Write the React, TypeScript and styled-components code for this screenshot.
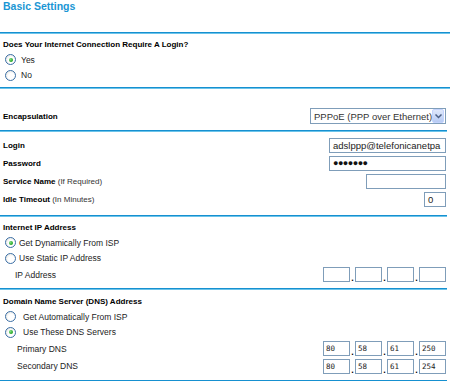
import { styled, createGlobalStyle } from 'styled-components';

const GlobalStyle = createGlobalStyle`
  body {
    margin: 0;
    background: #ffffff;
    font-family: "Liberation Sans", Arial, sans-serif;
    color: #000000;
  }
`

const Page = styled.div`
  width: 450px;
  display: flex;
  flex-direction: column;
  font-size: 8px;
`

const Title = styled.h1`
  margin: 0;
  height: 32px;
  padding-left: 3px;
  font-size: 10.5px;
  line-height: 13px;
  font-weight: bold;
  color: #1a96d4;
`

const Rule = styled.div<{ $short?: boolean }>`
  height: 1px;
  width: ${props => props.$short ? '447px' : '450px'};
  border-top: 1px solid #1690d0;
  background: #6cc4ea;
`

const Section = styled.div<{ $top: number, $bottom: number }>`
  display: flex;
  flex-direction: column;
  padding-top: ${props => props.$top}px;
  padding-bottom: ${props => props.$bottom}px;
`

const Row = styled.div<{ $h: number }>`
  height: ${props => props.$h}px;
  display: flex;
  align-items: center;
  justify-content: space-between;
  padding-left: 3px;
  padding-right: 4px;
`

const Heading = styled.span`
  font-weight: bold;
  color: #000000;
`

const Hint = styled.span`
  font-weight: normal;
  color: #333333;
`

const Label = styled.span<{ $indent?: number }>`
  padding-left: ${props => props.$indent ?? 0}px;
  color: #222222;
  font-size: 8.5px;
`

const RadioLine = styled.label<{ $gap: number }>`
  display: flex;
  align-items: center;
  gap: ${props => props.$gap}px;
  padding-left: 2px;
  color: #222222;
  font-size: 8.5px;
`

const RadioDot = styled.span<{ $checked?: boolean }>`
  width: 9px;
  height: 9px;
  border-radius: 50%;
  border: 1px solid #3a6ea5;
  background: radial-gradient(circle at 60% 60%, #ffffff 40%, #dcdcd6 100%);
  display: flex;
  align-items: center;
  justify-content: center;
  &::after {
    content: "";
    display: ${props => props.$checked ? 'block' : 'none'};
    width: 4px;
    height: 4px;
    border-radius: 50%;
    background: radial-gradient(circle at 35% 35%, #7ee07e 0%, #21a121 70%);
  }
`

const Select = styled.div`
  width: 131px;
  height: 14px;
  border: 1px solid #7f9db9;
  display: flex;
  align-items: center;
  justify-content: space-between;
  padding-left: 3px;
  font-size: 9.5px;
  color: #333333;
  white-space: nowrap;
`

const SelectButton = styled.span`
  width: 13px;
  height: 12px;
  margin-right: 1px;
  background: linear-gradient(#dfe8fb, #b7cbf3);
  border: 1px solid #c3d3fd;
  border-radius: 2px;
  display: flex;
  align-items: center;
  justify-content: center;
`

const TextBox = styled.div<{ $w: number }>`
  width: ${props => props.$w}px;
  height: 13px;
  border: 1px solid #7f9db9;
  display: flex;
  align-items: center;
  padding-left: 3px;
  box-sizing: content-box;
  font-size: 9.5px;
  color: #222222;
  overflow: hidden;
  white-space: nowrap;
`

const Dots = styled.span`
  font-size: 9px;
  letter-spacing: -0.5px;
  color: #111111;
`

const IpGroup = styled.div`
  display: flex;
  align-items: flex-end;
`

const IpCell = styled.span`
  display: flex;
  align-items: flex-end;
`

const IpBox = styled.div`
  width: 23px;
  height: 13px;
  border: 1px solid #7f9db9;
  padding-left: 2px;
  font-family: "DejaVu Sans Mono", monospace;
  font-size: 7.5px;
  line-height: 13px;
  color: #222222;
`

const IpDot = styled.span`
  width: 5px;
  text-align: center;
  font-weight: bold;
  font-size: 9px;
  line-height: 8px;
`

const RadioOption = ({ checked, gap, children }: { checked?: boolean, gap: number, children: React.ReactNode }) => (
  <RadioLine $gap={gap}>
    <RadioDot $checked={checked} />
    {children}
  </RadioLine>
)

const IpAddress = ({ parts }: { parts: string[] }) => (
  <IpGroup>
    {parts.map((part, index) => (
      <IpCell key={index}>
        {index > 0 && <IpDot>.</IpDot>}
        <IpBox>{part}</IpBox>
      </IpCell>
    ))}
  </IpGroup>
)

function App() {
  return (
    <Page>
      <GlobalStyle />
      <Title>Basic Settings</Title>
      <Rule />
      <Section $top={2} $bottom={4}>
        <Row $h={16}><Heading>Does Your Internet Connection Require A Login?</Heading></Row>
        <Row $h={15}><RadioOption checked gap={5}>Yes</RadioOption></Row>
        <Row $h={16}><RadioOption gap={5}>No</RadioOption></Row>
      </Section>
      <Rule />
      <Section $top={18} $bottom={5}>
        <Row $h={18}>
          <Heading>Encapsulation</Heading>
          <Select>
            PPPoE (PPP over Ethernet)
            <SelectButton>
              <svg width="7" height="5" viewBox="0 0 7 5">
                <path d="M0.5 0.5 L3.5 3.5 L6.5 0.5" fill="none" stroke="#4d6185" strokeWidth="1.5" />
              </svg>
            </SelectButton>
          </Select>
        </Row>
      </Section>
      <Rule $short />
      <Section $top={4} $bottom={6}>
        <Row $h={18}>
          <Heading>Login</Heading>
          <TextBox $w={112}>adslppp@telefonicanetpa</TextBox>
        </Row>
        <Row $h={18}>
          <Heading>Password</Heading>
          <TextBox $w={112}><Dots>●●●●●●●</Dots></TextBox>
        </Row>
        <Row $h={18}>
          <span><Heading>Service Name</Heading> <Hint>(If Required)</Hint></span>
          <TextBox $w={75} />
        </Row>
        <Row $h={19}>
          <span><Heading>Idle Timeout</Heading> <Hint>(In Minutes)</Hint></span>
          <TextBox $w={17}>0</TextBox>
        </Row>
      </Section>
      <Rule $short />
      <Section $top={3} $bottom={5}>
        <Row $h={15}><Heading>Internet IP Address</Heading></Row>
        <Row $h={15}><RadioOption checked gap={3}>Get Dynamically From ISP</RadioOption></Row>
        <Row $h={16}><RadioOption gap={3}>Use Static IP Address</RadioOption></Row>
        <Row $h={17}>
          <Label $indent={12}>IP Address</Label>
          <IpAddress parts={['', '', '', '']} />
        </Row>
      </Section>
      <Rule $short />
      <Section $top={3} $bottom={5}>
        <Row $h={16}><Heading>Domain Name Server (DNS) Address</Heading></Row>
        <Row $h={15}><RadioOption gap={7}>Get Automatically From ISP</RadioOption></Row>
        <Row $h={16}><RadioOption checked gap={7}>Use These DNS Servers</RadioOption></Row>
        <Row $h={17}>
          <Label $indent={14}>Primary DNS</Label>
          <IpAddress parts={['80', '58', '61', '250']} />
        </Row>
        <Row $h={18}>
          <Label $indent={14}>Secondary DNS</Label>
          <IpAddress parts={['80', '58', '61', '254']} />
        </Row>
      </Section>
      <Rule $short />
    </Page>
  )
}

export default App;
